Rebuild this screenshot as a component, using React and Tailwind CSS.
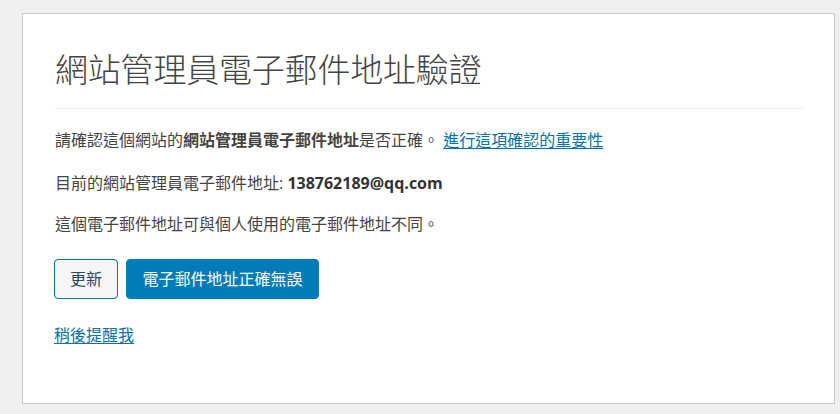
export default function App() {
  const font = { fontFamily: '"Open Sans", "Noto Sans CJK TC", sans-serif' };
  return (
    <div className="w-[840px] h-[414px] bg-[#f0f0f1] pt-[13px] pl-[22px] overflow-hidden" style={font}>
      <div className="w-[813px] h-[391px] bg-white border border-[#c8c9cc] pl-[32px] pr-[30px] pt-[36px] text-[#444]">
        <h1 className="text-[33px] leading-[40px] font-light text-[#444] tracking-[-0.2px]">網站管理員電子郵件地址驗證</h1>
        <div className="mt-[18px] h-px bg-[#eeeeee]" />
        <p className="mt-[19px] text-[16px] leading-[24px]">
          請確認這個網站的<strong className="font-bold">網站管理員電子郵件地址</strong>是否正確。{' '}
          <a href="#" className="text-[#0073aa] underline underline-offset-2 decoration-1">進行這項確認的重要性</a>
        </p>
        <p className="mt-[19px] text-[16px] leading-[24px]">
          目前的網站管理員電子郵件地址: <strong className="font-bold text-[#333]">138762189@qq.com</strong>
        </p>
        <p className="mt-[17px] text-[16px] leading-[24px]">這個電子郵件地址可與個人使用的電子郵件地址不同。</p>
        <div className="mt-[23px] -ml-px flex gap-[8px]">
          <button className="h-[40px] w-[64px] rounded-[4px] border border-[#0071a1] bg-[#f3f5f6] text-[16px] text-[#2c4a5c] flex items-center justify-center">更新</button>
          <button className="h-[40px] w-[193px] rounded-[4px] border border-[#007cba] bg-[#007cba] text-[16px] text-white flex items-center justify-center">電子郵件地址正確無誤</button>
        </div>
        <p className="mt-[24px] -ml-px text-[16px] leading-[24px]">
          <a href="#" className="text-[#0073aa] underline underline-offset-2 decoration-1">稍後提醒我</a>
        </p>
      </div>
    </div>
  );
}
